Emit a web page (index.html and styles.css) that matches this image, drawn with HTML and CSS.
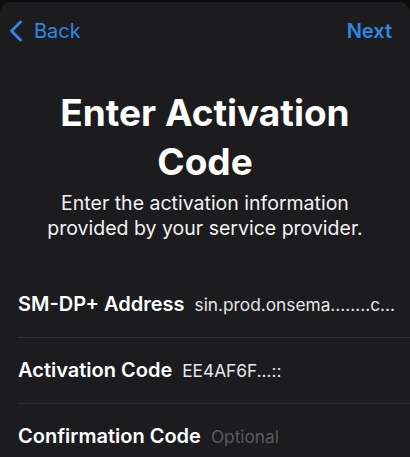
FILE: index.html
```html
<!DOCTYPE html>
<html lang="en">
<head>
    <meta charset="UTF-8">
    <meta name="viewport" content="width=device-width, initial-scale=1.0">
    <title>Enter Activation Code</title>
    <link rel="stylesheet" href="styles.css">
</head>
<body>
    <div class="sheet">
        <div class="nav">
            <a class="nav-back" href="#">
                <svg class="chevron" width="16" height="22" viewBox="0 0 16 22">
                    <path d="M12.5 2 L3.5 11 L12.5 20" fill="none" stroke="currentColor" stroke-width="3" stroke-linecap="round" stroke-linejoin="round"/>
                </svg>
                <span>Back</span>
            </a>
            <a class="nav-next" href="#">Next</a>
        </div>

        <h1 class="title">Enter Activation Code</h1>
        <p class="subtitle">Enter the activation information provided by your service provider.</p>

        <div class="fields">
            <div class="field">
                <span class="label">SM-DP+ Address</span>
                <span class="value">sin.prod.onsema........c...</span>
            </div>
            <div class="field">
                <span class="label">Activation Code</span>
                <span class="value">EE4AF6F...::</span>
            </div>
            <div class="field">
                <span class="label">Confirmation Code</span>
                <span class="value placeholder">Optional</span>
            </div>
        </div>
    </div>
</body>
</html>
```

FILE: styles.css
```css
body {
    margin: 0;
    padding: 0;
    background: #0c0c0d;
    font-family: 'Inter', 'Noto Sans', sans-serif;
    color: #fff;
    height: 457px;
    overflow: hidden;
}

.sheet {
    margin-top: 2px;
    height: 455px;
    overflow: hidden;
    background-color: #1c1c1e;
    border-radius: 11px 11px 0 0;
}

.nav {
    display: flex;
    justify-content: space-between;
    align-items: center;
    height: 58px;
    padding: 0 18px 0 8px;
}

.nav a {
    color: #2f87e4;
    text-decoration: none;
    font-size: 20px;
}

.nav-back {
    display: flex;
    align-items: center;
    gap: 10px;
}

.chevron {
    display: block;
}

.nav-next {
    font-weight: 600;
}

.title {
    margin: 28px 0 0;
    text-align: center;
    font-size: 37px;
    font-weight: 700;
    line-height: 49px;
    padding: 0 40px;
}

.subtitle {
    margin: 5px 0 0;
    text-align: center;
    font-size: 19.5px;
    line-height: 25px;
    color: #f2f2f2;
    padding: 0 30px;
}

.fields {
    margin-top: 31px;
    padding-left: 18px;
}

.field {
    display: flex;
    align-items: baseline;
    gap: 10px;
    height: 65px;
    line-height: 65px;
    border-bottom: 1px solid #2e2e31;
    white-space: nowrap;
}

.field:last-child {
    border-bottom: none;
}

.label {
    font-size: 20px;
    font-weight: 600;
}

.value {
    font-size: 17.3px;
    color: #e6e6e6;
}

.placeholder {
    color: #5b5b60;
}
```
